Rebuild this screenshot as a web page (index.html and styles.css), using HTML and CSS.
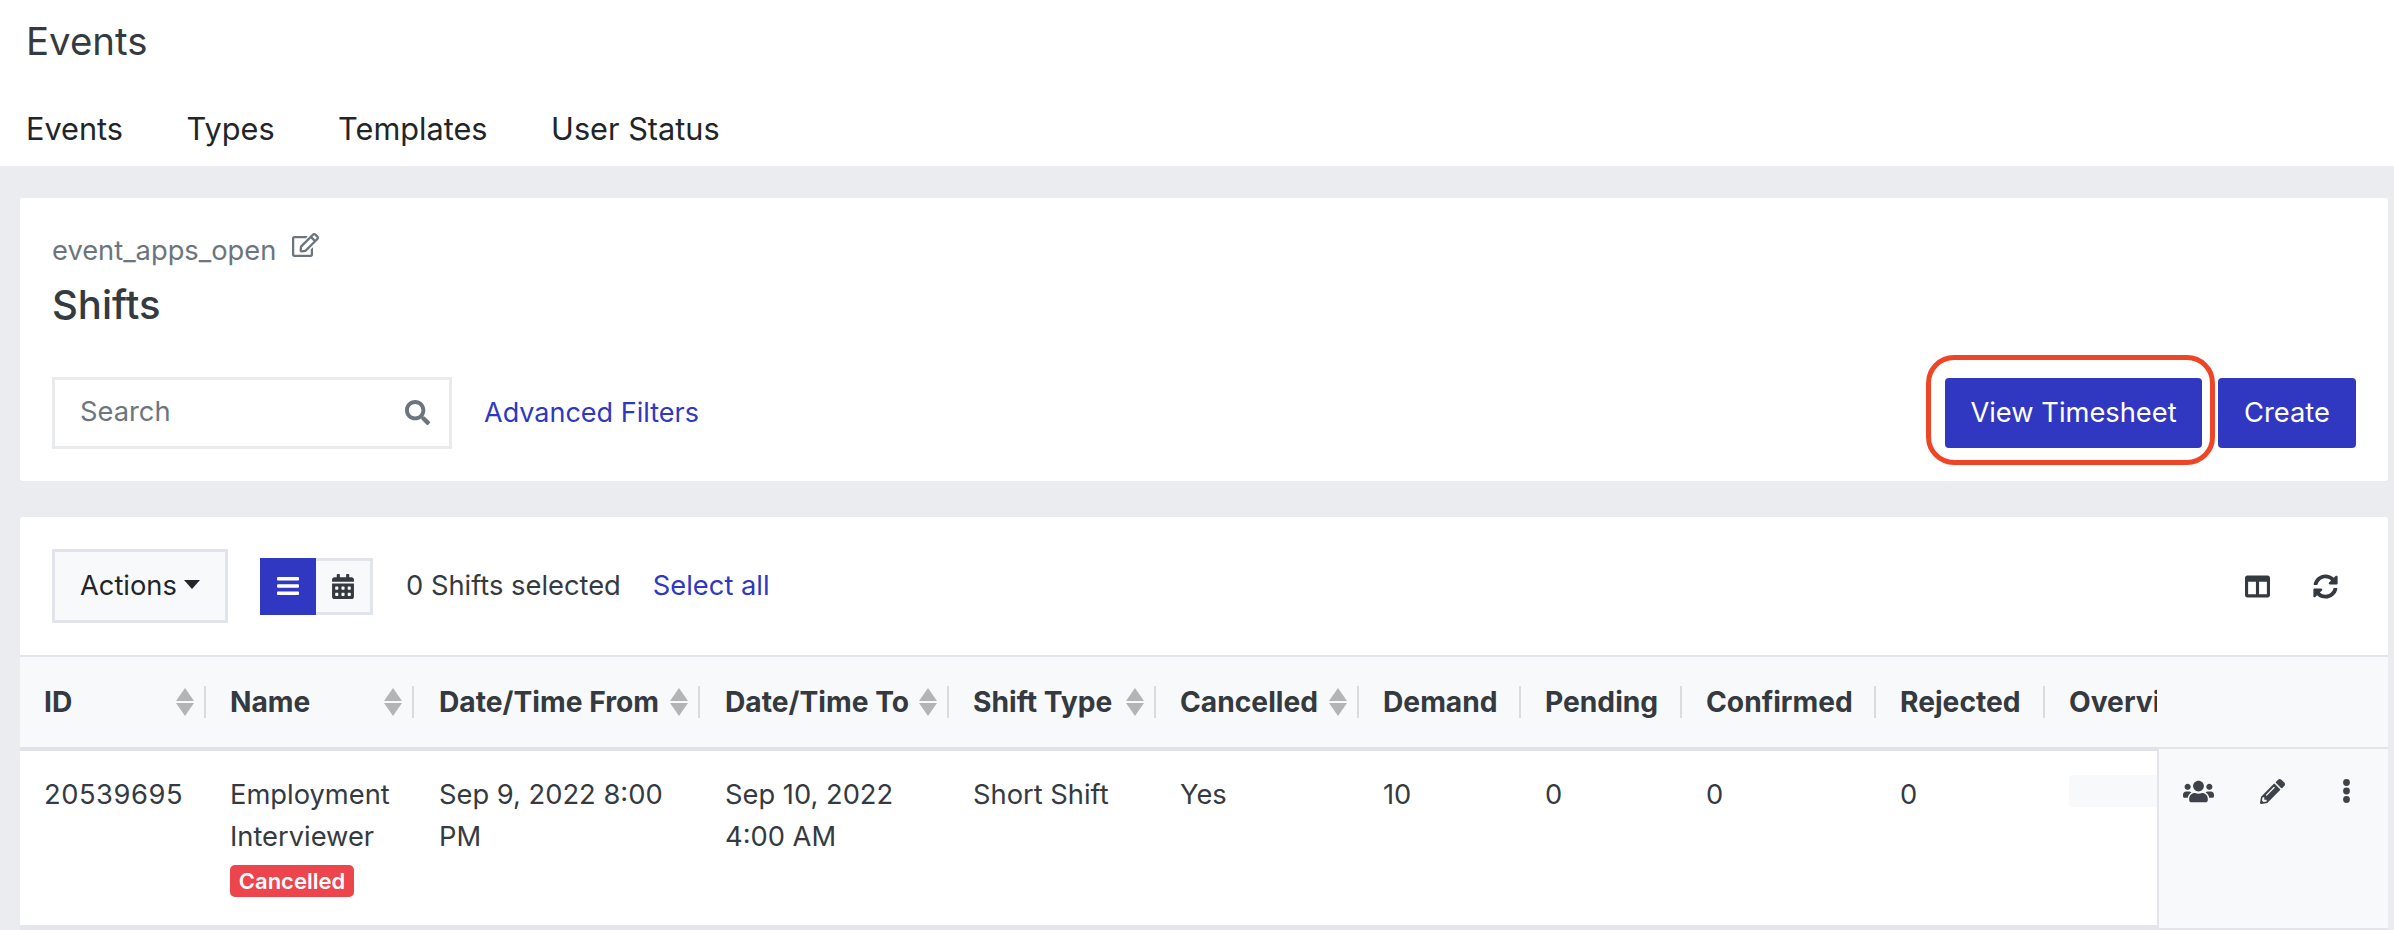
FILE: index.html
```html
<!DOCTYPE html>
<html lang="en">
<head>
<meta charset="utf-8">
<title>Shifts</title>
<link rel="stylesheet" href="styles.css">
</head>
<body>
<header class="top">
  <h1 class="top-title">Events</h1>
  <nav class="top-nav">
    <a>Events</a><a>Types</a><a>Templates</a><a>User Status</a>
  </nav>
</header>
<main class="main">
  <section class="card head-card">
    <div class="crumb">
      <span>event_apps_open</span>
      <svg class="edit-icon" viewBox="0 0 576 512"><path d="M402.3 344.9l32-32c5-5 13.7-1.5 13.7 5.7V464c0 26.5-21.5 48-48 48H48c-26.5 0-48-21.5-48-48V112c0-26.5 21.5-48 48-48h273.5c7.1 0 10.7 8.6 5.7 13.7l-32 32c-1.5 1.5-3.5 2.3-5.7 2.3H48v352h352V350.5c0-2.1.8-4.1 2.3-5.6zm156.6-201.8L296.3 405.7l-90.4 10c-26.2 2.9-48.5-19.2-45.6-45.6l10-90.4L432.9 17.1c22.9-22.9 59.9-22.9 82.7 0l43.2 43.2c22.9 22.9 22.9 60 .1 82.8zM460.1 174L402 115.9 216.2 301.8l-7.3 65.3 65.3-7.3L460.1 174zm64.8-79.7l-43.2-43.2c-4.1-4.1-10.8-4.1-14.8 0L436 82l58.1 58.1 30.9-30.9c4-4.2 4-10.8-.1-14.9z"/></svg>
    </div>
    <h2 class="page-title">Shifts</h2>
    <div class="filter-row">
      <div class="search">
        <span class="search-ph">Search</span>
        <svg class="search-icon" viewBox="0 0 512 512"><path d="M505 442.7L405.3 343c-4.5-4.5-10.6-7-17-7H372c27.6-35.3 44-79.7 44-128C416 93.1 322.9 0 208 0S0 93.1 0 208s93.1 208 208 208c48.3 0 92.7-16.4 128-44v16.3c0 6.4 2.5 12.5 7 17l99.7 99.7c9.4 9.4 24.6 9.4 33.9 0l28.3-28.3c9.4-9.4 9.4-24.6.1-34zM208 336c-70.7 0-128-57.2-128-128 0-70.7 57.2-128 128-128 70.7 0 128 57.2 128 128 0 70.7-57.2 128-128 128z"/></svg>
      </div>
      <a class="link adv">Advanced Filters</a>
      <div class="btns">
        <span class="highlighted"><button class="btn btn-view">View Timesheet</button></span>
        <button class="btn btn-create">Create</button>
      </div>
    </div>
  </section>

  <section class="card list-card">
    <div class="toolbar">
      <button class="actions">Actions<span class="caret"></span></button>
      <div class="toggle">
        <span class="toggle-on">
          <svg class="bars" viewBox="0 0 22 18"><rect y="0" width="22" height="3.4" rx="1"/><rect y="7.3" width="22" height="3.4" rx="1"/><rect y="14.6" width="22" height="3.4" rx="1"/></svg>
        </span>
        <span class="toggle-off">
          <svg class="cal" viewBox="0 0 448 512"><path d="M0 464c0 26.5 21.5 48 48 48h352c26.5 0 48-21.5 48-48V192H0v272zm320-196c0-6.6 5.4-12 12-12h40c6.6 0 12 5.4 12 12v40c0 6.6-5.4 12-12 12h-40c-6.6 0-12-5.4-12-12v-40zm0 128c0-6.6 5.4-12 12-12h40c6.6 0 12 5.4 12 12v40c0 6.6-5.4 12-12 12h-40c-6.6 0-12-5.4-12-12v-40zM192 268c0-6.6 5.4-12 12-12h40c6.6 0 12 5.4 12 12v40c0 6.6-5.4 12-12 12h-40c-6.6 0-12-5.4-12-12v-40zm0 128c0-6.6 5.4-12 12-12h40c6.6 0 12 5.4 12 12v40c0 6.6-5.4 12-12 12h-40c-6.6 0-12-5.4-12-12v-40zM64 268c0-6.6 5.4-12 12-12h40c6.6 0 12 5.4 12 12v40c0 6.6-5.4 12-12 12H76c-6.6 0-12-5.4-12-12v-40zm0 128c0-6.6 5.4-12 12-12h40c6.6 0 12 5.4 12 12v40c0 6.6-5.4 12-12 12H76c-6.6 0-12-5.4-12-12v-40zM400 64h-48V16c0-8.8-7.2-16-16-16h-32c-8.8 0-16 7.2-16 16v48H160V16c0-8.8-7.2-16-16-16h-32c-8.8 0-16 7.2-16 16v48H48C21.5 64 0 85.5 0 112v48h448v-48c0-26.5-21.5-48-48-48z"/></svg>
        </span>
      </div>
      <span class="sel-count">0 Shifts selected</span>
      <a class="link sel-all">Select all</a>
      <div class="tools">
        <svg class="tool-cols" viewBox="0 0 512 512"><path d="M464 32H48C21.49 32 0 53.49 0 80v352c0 26.51 21.49 48 48 48h416c26.51 0 48-21.49 48-48V80c0-26.51-21.49-48-48-48zM224 416H64V160h160v256zm224 0H288V160h160v256z"/></svg>
        <svg class="tool-sync" viewBox="0 0 512 512"><path d="M370.72 133.28C339.458 104.008 298.888 87.962 255.848 88c-77.458.068-144.328 53.178-162.791 126.85-1.344 5.363-6.122 9.15-11.651 9.15H24.103c-7.498 0-13.194-6.807-11.807-14.176C33.933 94.924 134.813 8 256 8c66.448 0 126.791 26.136 171.315 68.685L463.03 40.97C478.149 25.851 504 36.559 504 57.941V192c0 13.255-10.745 24-24 24H345.941c-21.382 0-32.09-25.851-16.971-40.971l41.75-41.749zM32 296h134.059c21.382 0 32.09 25.851 16.971 40.971l-41.75 41.75c31.262 29.273 71.835 45.319 114.876 45.28 77.418-.07 144.315-53.144 162.787-126.849 1.344-5.363 6.122-9.15 11.651-9.15h57.304c7.498 0 13.194 6.807 11.807 14.176C478.067 417.076 377.187 504 256 504c-66.448 0-126.791-26.136-171.315-68.685L48.97 471.03C33.851 486.149 8 475.441 8 454.059V320c0-13.255 10.745-24 24-24z"/></svg>
      </div>
    </div>

    <div class="table-wrap">
      <div class="table-scroll">
        <div class="grid grid-head">
          <div class="th"><span class="th-label">ID</span><span class="sort"></span></div>
          <div class="th"><span class="th-label">Name</span><span class="sort"></span></div>
          <div class="th"><span class="th-label">Date/Time From</span><span class="sort"></span></div>
          <div class="th"><span class="th-label">Date/Time To</span><span class="sort"></span></div>
          <div class="th"><span class="th-label">Shift Type</span><span class="sort"></span></div>
          <div class="th"><span class="th-label">Cancelled</span><span class="sort"></span></div>
          <div class="th"><span class="th-label">Demand</span></div>
          <div class="th"><span class="th-label">Pending</span></div>
          <div class="th"><span class="th-label">Confirmed</span></div>
          <div class="th"><span class="th-label">Rejected</span></div>
          <div class="th th-last"><span class="th-label">Overview</span></div>
        </div>
        <div class="grid grid-row">
          <div class="td td-id">20539695</div>
          <div class="td">Employment Interviewer<span class="badge">Cancelled</span></div>
          <div class="td">Sep 9, 2022 8:00 PM</div>
          <div class="td">Sep 10, 2022 4:00 AM</div>
          <div class="td">Short Shift</div>
          <div class="td">Yes</div>
          <div class="td">10</div>
          <div class="td">0</div>
          <div class="td">0</div>
          <div class="td">0</div>
          <div class="td"><div class="overview-bar"></div></div>
        </div>
      </div>
      <div class="sticky">
        <div class="sticky-head"></div>
        <div class="sticky-body">
          <svg class="ic-users" viewBox="0 0 640 512"><path d="M96 224c35.3 0 64-28.7 64-64s-28.7-64-64-64-64 28.7-64 64 28.7 64 64 64zm448 0c35.3 0 64-28.7 64-64s-28.7-64-64-64-64 28.7-64 64 28.7 64 64 64zm32 32h-64c-17.6 0-33.5 7.1-45.1 18.6 40.3 22.1 68.9 62 75.1 109.4h66c17.7 0 32-14.3 32-32v-32c0-35.3-28.7-64-64-64zm-256 0c61.9 0 112-50.1 112-112S381.9 32 320 32 208 82.1 208 144s50.1 112 112 112zm76.8 32h-8.3c-20.8 10-43.9 16-68.5 16s-47.6-6-68.5-16h-8.3C179.6 288 128 339.6 128 403.2V432c0 26.5 21.5 48 48 48h288c26.5 0 48-21.5 48-48v-28.8c0-63.6-51.6-115.2-115.2-115.2zm-223.7-13.4C161.5 263.1 145.6 256 128 256H64c-35.3 0-64 28.7-64 64v32c0 17.7 14.3 32 32 32h65.9c6.3-47.4 34.9-87.3 75.2-109.4z"/></svg>
          <svg class="ic-pencil" viewBox="0 0 512 512"><path d="M497.9 142.1l-46.1 46.1c-4.7 4.7-12.3 4.7-17 0l-111-111c-4.7-4.7-4.7-12.3 0-17l46.1-46.1c18.7-18.7 49.1-18.7 67.9 0l60.1 60.1c18.8 18.7 18.8 49.1 0 67.9zM284.2 99.8L21.6 362.4.4 483.9c-2.9 16.4 11.4 30.6 27.8 27.8l121.5-21.3 262.6-262.6c4.7-4.7 4.7-12.3 0-17l-111-111c-4.8-4.7-12.4-4.7-17.1 0zM124.1 339.9c-5.5-5.5-5.5-14.3 0-19.8l154-154c5.5-5.5 14.3-5.5 19.8 0s5.5 14.3 0 19.8l-154 154c-5.5 5.5-14.3 5.5-19.8 0zM88 424h48v36.3l-64.5 11.3-31.1-31.1L51.7 376H88v48z"/></svg>
          <svg class="ic-dots" viewBox="0 0 7 24"><circle cx="3.5" cy="3.5" r="3.4"/><circle cx="3.5" cy="12" r="3.4"/><circle cx="3.5" cy="20.5" r="3.4"/></svg>
        </div>
      </div>
    </div>
  </section>
</main>
</body>
</html>
```
FILE: styles.css
```css
* { box-sizing: border-box; }
html, body { margin: 0; height: 100%; }
body {
  height: 930px;
  overflow: hidden;
  background: #eaecf0;
  font-family: Inter, "Liberation Sans", sans-serif;
  font-size: 27.3px;
  line-height: 42px;
  color: #343a40;
}

/* top bar */
.top { height: 166px; background: #fff; padding: 0 26px; }
.top-title { margin: 0; height: 82px; font-size: 38.4px; font-weight: 400; line-height: 82px; color: #343a40; }
.top-nav { display: flex; gap: 63.5px; height: 84px; align-items: center; padding-top: 9px; font-size: 30.7px; color: #212529; }

/* cards */
.main { padding: 32px 6px 0 20px; }
.card { background: #fff; }
.head-card { height: 283px; padding: 0 32px; border-radius: 3px; }
.list-card { margin-top: 36px; border-radius: 3px; }

.crumb { display: flex; align-items: center; height: 70px; padding-top: 35px; color: #6c757d; }
.edit-icon { width: 27px; height: 24px; margin: -12px 0 0 16px; fill: #6c757d; }
.page-title { margin: 0; height: 74px; font-size: 40px; font-weight: 500; line-height: 74px; color: #343a40; }

.filter-row { display: flex; align-items: center; margin-top: 35px; height: 72px; }
.search { width: 400px; height: 72px; border: 3px solid #e9ebef; display: flex; align-items: center; justify-content: space-between; padding: 0 19px 2px 25px; }
.search-ph { color: #6c757d; }
.search-icon { width: 25px; height: 25px; fill: #6c757d; }
.link { color: #2f38c2; }
.adv { margin-left: 32px; font-size: 27px; }
.btns { margin-left: auto; display: flex; gap: 16px; }
.highlighted { position: relative; display: block; }
.highlighted::after { content: ""; position: absolute; inset: -23px -13px -17px -19px; border: 5px solid #ef4527; border-radius: 28px; }
.btn { display: block; height: 70px; border: 0; border-radius: 4px; background: #3038c2; color: #fff; font: inherit; padding: 0; }
.btn-view { width: 257px; }
.btn-create { width: 138px; }

/* toolbar */
.toolbar { display: flex; align-items: center; height: 138px; padding: 0 32px; }
.actions { display: flex; align-items: center; width: 176px; height: 74px; padding: 0 0 0 25px; border: 3px solid #e1e4ea; background: #f8f9fb; color: #212529; font: inherit; }
.caret { width: 0; height: 0; margin: -4px 0 0 7px; border: 8px solid transparent; border-top: 9px solid #212529; border-bottom: 0; }
.toggle { display: flex; height: 57px; margin-left: 32px; }
.toggle-on { width: 56px; background: #3038c2; display: flex; align-items: center; justify-content: center; }
.bars { width: 22px; height: 18px; fill: #fff; }
.toggle-off { width: 57px; background: #f8f9fb; border: 3px solid #e1e4ea; border-left: 0; display: flex; align-items: center; justify-content: center; }
.cal { width: 22px; height: 25px; fill: #343a40; }
.sel-count { margin-left: 33px; }
.sel-all { margin-left: 32px; }
.tools { margin-left: auto; display: flex; align-items: center; gap: 43px; padding-right: 18px; }
.tool-cols { width: 25px; height: 25px; fill: #343a40; }
.tool-sync { width: 25px; height: 25px; fill: #343a40; }

/* table */
.table-wrap { display: flex; }
.table-scroll { width: 2137px; overflow: hidden; }
.grid { display: grid; width: 2230px; grid-template-columns: 186px 208px 286px 249px 207px 203px 162px 161px 194px 169px 205px; }
.grid-head { height: 96px; border-top: 2px solid #e1e4ea; border-bottom: 4px solid #dfe2e8; background: #f8f9fb; align-items: start; }
.th { display: flex; align-items: center; height: 32px; margin-top: 29px; padding: 0 10px 0 24px; border-right: 2px solid #d8dbe0; font-size: 28.2px; font-weight: 650; white-space: nowrap; color: #343a40; }
.th:nth-child(3), .th:nth-child(4) { padding-left: 25px; }
.th-last { border-right: 0; }
.th-label { flex: 1; }
.sort { width: 18px; height: 28px; display: block; position: relative; }
.sort::before, .sort::after { content: ""; position: absolute; left: 0; border-left: 9px solid transparent; border-right: 9px solid transparent; }
.sort::before { top: 0; border-bottom: 13px solid #b2b4b6; }
.sort::after { bottom: 0; border-top: 13px solid #b2b4b6; }
.grid-row { height: 179px; border-bottom: 5px solid #e4e6eb; background: #fff; }
.td { padding: 23px 24px 0 24px; }
.td:nth-child(3), .td:nth-child(4) { padding-left: 25px; }
.td-id { letter-spacing: .55px; }
.badge { display: block; width: 124px; height: 32px; margin: 7px 0 0 0; background: #ed454e; border-radius: 5px; color: #fff; font-size: 22px; font-weight: 600; line-height: 32px; text-align: center; }
.overview-bar { width: 200px; height: 32px; margin-top: 1px; background: #f8f9fb; border-radius: 4px; }

.sticky { flex: 1; display: flex; flex-direction: column; }
.sticky-head { height: 92px; border-top: 2px solid #e1e4ea; background: #f8f9fb; }
.sticky-body { height: 183px; background: #f8f9fb; border-left: 2px solid #e3e5ea; border-top: 2px solid #e3e5ea; border-bottom: 2px solid #e3e5ea; display: flex; align-items: flex-start; padding: 30px 0 0 24px; }
.sticky-body svg { fill: #3d4349; display: block; }
.ic-users { width: 31px; height: 25px; }
.ic-pencil { width: 25px; height: 25px; margin-left: 46px; }
.ic-dots { width: 7px; height: 24px; margin-left: 58px; }
```
